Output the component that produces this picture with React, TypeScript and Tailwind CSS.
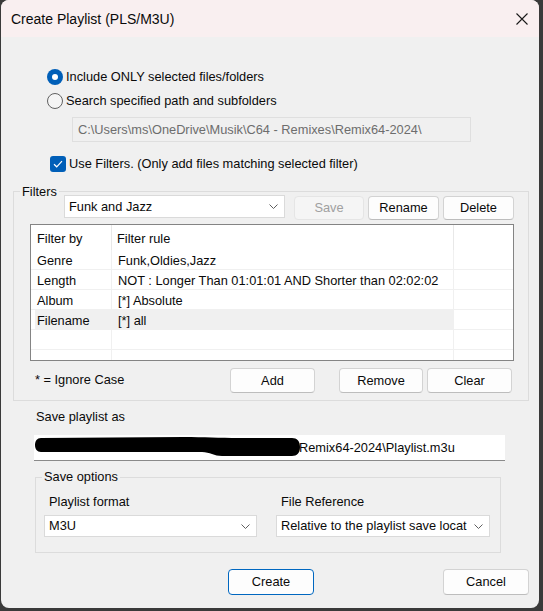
import React from "react";

const FONT = "font-['Liberation_Sans',Arial,sans-serif]";

function Chevron() {
  return (
    <svg width="9" height="5" viewBox="0 0 9 5" className="shrink-0">
      <path d="M0.5 0.5 L4.5 4.5 L8.5 0.5" fill="none" stroke="#5f5f5f" strokeWidth="1" />
    </svg>
  );
}

function Button({
  children,
  className = "",
  disabled = false,
  primary = false,
}: {
  children: React.ReactNode;
  className?: string;
  disabled?: boolean;
  primary?: boolean;
}) {
  const base =
    "flex items-center justify-center rounded-[4px] border text-[12.8px] shrink-0";
  const look = disabled
    ? "bg-[#f5f5f5] border-[#e5e5e5] text-[#a0a0a0]"
    : primary
    ? "bg-[#fdfdfd] border-[#0067c0] text-[#0a0a0a]"
    : "bg-[#fdfdfd] border-[#d3d3d3] border-b-[#bdbdbd] text-[#0a0a0a]";
  return <div className={`${base} ${look} ${className}`}>{children}</div>;
}

function Combo({ value, className = "" }: { value: string; className?: string }) {
  return (
    <div
      className={`flex items-center justify-between bg-white border border-[#dadada] pl-[4px] pr-[6px] text-[12.8px] text-[#0a0a0a] shrink-0 ${className}`}
    >
      <span className="whitespace-nowrap overflow-hidden">{value}</span>
      <Chevron />
    </div>
  );
}

const rows: { by: string; rule: string; selected?: boolean }[] = [
  { by: "Genre", rule: "Funk,Oldies,Jazz" },
  { by: "Length", rule: "NOT : Longer Than 01:01:01 AND Shorter than 02:02:02" },
  { by: "Album", rule: "[*] Absolute" },
  { by: "Filename", rule: "[*] all", selected: true },
  { by: "", rule: "" },
  { by: "", rule: "" },
];

export default function App() {
  return (
    <div className={`w-[543px] h-[611px] bg-[#3a3a3a] pl-[1px] ${FONT} text-[#0a0a0a]`}>
      <div className="w-[538px] h-[608px] rounded-[8px] overflow-hidden bg-[#f0f0f0] flex flex-col">
        {/* Title bar */}
        <div className="h-[37px] shrink-0 bg-[#f9eff0] flex items-center justify-between pl-[10px] pr-[11px]">
          <span className="text-[14px] pt-[1px]">Create Playlist (PLS/M3U)</span>
          <svg width="12" height="12" viewBox="0 0 12 12" className="mt-[1px]">
            <path d="M0.5 0.5 L11.5 11.5 M11.5 0.5 L0.5 11.5" stroke="#1a1a1a" strokeWidth="1.1" />
          </svg>
        </div>

        {/* Radio 1 */}
        <div className="mt-[30px] ml-[46px] h-[20px] flex items-center text-[12.8px]">
          <div className="w-[16px] h-[16px] rounded-full bg-[#005fb8] flex items-center justify-center">
            <div className="w-[6px] h-[6px] rounded-full bg-white" />
          </div>
          <span className="ml-[3px]">Include ONLY selected files/folders</span>
        </div>

        {/* Radio 2 */}
        <div className="mt-[4px] ml-[46px] h-[20px] flex items-center text-[12.8px]">
          <div className="w-[16px] h-[16px] rounded-full border border-[#616161] bg-[#f5f5f5]" />
          <span className="ml-[3px]">Search specified path and subfolders</span>
        </div>

        {/* Path box (disabled) */}
        <div className="mt-[6px] ml-[71px] w-[399px] h-[25px] border border-[#dfdfdf] bg-[#f0f0f0] flex items-center pl-[5px] text-[12.8px] text-[#6d6d6d]">
          C:\Users\ms\OneDrive\Musik\C64 - Remixes\Remix64-2024\
        </div>

        {/* Checkbox */}
        <div className="mt-[12px] ml-[49px] h-[20px] flex items-center text-[12.8px]">
          <div className="w-[16px] h-[16px] rounded-[3px] bg-[#005fb8] flex items-center justify-center">
            <svg width="10" height="8" viewBox="0 0 10 8">
              <path d="M1 4.2 L3.7 6.8 L9 1.2" fill="none" stroke="white" strokeWidth="1.2" />
            </svg>
          </div>
          <span className="ml-[3px]">Use Filters. (Only add files matching selected filter)</span>
        </div>

        {/* Filters group */}
        <div className="relative mt-[17px] ml-[12px] w-[516px] h-[210px] border border-[#dcdcdc] shrink-0">
          <span className="absolute left-[6px] top-[-8px] bg-[#f0f0f0] px-[2px] text-[12.8px] leading-[16px]">
            Filters
          </span>

          {/* Top row */}
          <div className="mt-[3px] ml-[50px] h-[25px] flex items-start">
            <Combo value="Funk and Jazz" className="w-[221px] h-[23px]" />
            <Button disabled className="ml-[9px] mt-[1px] w-[70px] h-[24px]">
              Save
            </Button>
            <Button className="ml-[4px] mt-[1px] w-[71px] h-[24px]">Rename</Button>
            <Button className="ml-[4px] mt-[1px] w-[71px] h-[24px]">Delete</Button>
          </div>

          {/* Table */}
          <div className="mt-[4px] ml-[16px] w-[484px] h-[137px] border border-[#848484] bg-white overflow-hidden text-[12.8px]">
            <div className="h-[25px] flex">
              <div className="w-[81px] h-full border-r border-[#e8e8e8] flex items-center pl-[6px] pt-[2px]">
                Filter by
              </div>
              <div className="w-[342px] h-full border-r border-[#e8e8e8] flex items-center pl-[5px] pt-[2px]">
                Filter rule
              </div>
              <div className="flex-1" />
            </div>
            {rows.map((r, i) => (
              <div key={i} className="h-[20px] flex pl-[4px] border-b border-[#f0f0f0]">
                <div
                  className={`w-[77px] h-full border-r border-[#f0f0f0] flex items-center pl-[2px] pt-[2px] whitespace-nowrap ${
                    r.selected ? "bg-[#f0f0f0]" : ""
                  }`}
                >
                  {r.by}
                </div>
                <div
                  className={`w-[342px] h-full border-r border-[#f0f0f0] flex items-center pl-[6px] pt-[2px] whitespace-nowrap ${
                    r.selected ? "bg-[#f0f0f0]" : ""
                  }`}
                >
                  {r.rule}
                </div>
                <div className="flex-1" />
              </div>
            ))}
          </div>

          {/* Bottom row */}
          <div className="mt-[7px] h-[24px] flex items-start">
            <div className="w-[216px] pl-[21px] pt-[2px] text-[12.8px] whitespace-nowrap">* = Ignore Case</div>
            <Button className="w-[85px] h-[25px]">Add</Button>
            <Button className="ml-[24px] w-[84px] h-[25px]">Remove</Button>
            <Button className="ml-[4px] w-[85px] h-[25px]">Clear</Button>
          </div>
        </div>

        {/* Save playlist as */}
        <div className="mt-[6px] ml-[35px] h-[20px] flex items-center text-[12.8px]">Save playlist as</div>

        <div className="mt-[8px] ml-[33px] w-[471px] h-[26px] bg-white border-b border-[#8a8a8a] flex items-center text-[12.8px] shrink-0">
          <svg width="266" height="26" viewBox="0 0 266 26" className="shrink-0">
            <path
              d="M7 3 C3 3 1 6 1 10 C1 14 3 17 7 17 L168 17 C176 17 180 21 188 21 L258 21 C263 21 266 18 266 12 C266 6 263 3 258 3 L205 3 C185 3 170 2 150 2 Z"
              fill="#000"
            />
          </svg>
          <span className="-ml-[1px] whitespace-nowrap">Remix64-2024\Playlist.m3u</span>
        </div>

        {/* Save options group */}
        <div className="relative mt-[16px] ml-[34px] w-[466px] h-[76px] border border-[#dcdcdc] shrink-0">
          <span className="absolute left-[6px] top-[-9px] bg-[#f0f0f0] px-[2px] text-[12.8px] leading-[16px]">
            Save options
          </span>
          <div className="mt-[14px] h-[20px] flex text-[12.8px]">
            <div className="ml-[8px] w-[213px] pl-[5px] flex items-center">Playlist format</div>
            <div className="ml-[19px] w-[214px] pl-[5px] flex items-center">File Reference</div>
          </div>
          <div className="mt-[3px] flex">
            <Combo value="M3U" className="ml-[8px] w-[213px] h-[22px]" />
            <Combo value="Relative to the playlist save locat" className="ml-[19px] w-[214px] h-[22px]" />
          </div>
        </div>

        {/* Bottom buttons */}
        <div className="mt-[16px] ml-[227px] flex">
          <Button primary className="w-[86px] h-[26px]">
            Create
          </Button>
          <Button className="ml-[129px] w-[86px] h-[26px]">Cancel</Button>
        </div>
      </div>
    </div>
  );
}
